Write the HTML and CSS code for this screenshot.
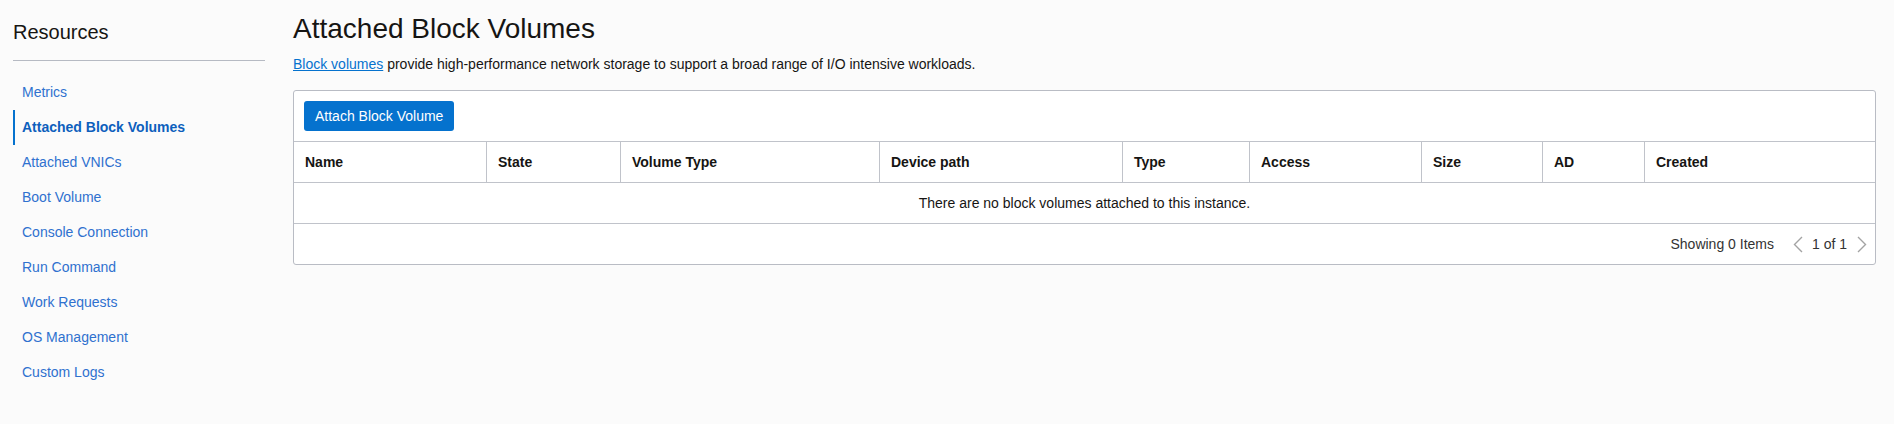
FILE: index.html
```html
<!DOCTYPE html>
<html lang="en">
<head>
<meta charset="utf-8">
<title>Attached Block Volumes</title>
<link rel="stylesheet" href="styles.css">
</head>
<body>
<div class="page">
  <aside class="sidebar">
    <h2 class="sidebar-title">Resources</h2>
    <nav class="sidebar-nav">
      <a class="nav-link" href="#">Metrics</a>
      <a class="nav-link active" href="#">Attached Block Volumes</a>
      <a class="nav-link" href="#">Attached VNICs</a>
      <a class="nav-link" href="#">Boot Volume</a>
      <a class="nav-link" href="#">Console Connection</a>
      <a class="nav-link" href="#">Run Command</a>
      <a class="nav-link" href="#">Work Requests</a>
      <a class="nav-link" href="#">OS Management</a>
      <a class="nav-link" href="#">Custom Logs</a>
    </nav>
  </aside>
  <main class="main">
    <h1 class="title">Attached Block Volumes</h1>
    <p class="subtitle"><a class="link" href="#">Block volumes</a> provide high-performance network storage to support a broad range of I/O intensive workloads.</p>
    <section class="panel">
      <div class="toolbar">
        <button class="btn-primary" type="button">Attach Block Volume</button>
      </div>
      <div class="grid-row head">
        <div class="th">Name</div>
        <div class="th">State</div>
        <div class="th">Volume Type</div>
        <div class="th">Device path</div>
        <div class="th">Type</div>
        <div class="th">Access</div>
        <div class="th">Size</div>
        <div class="th">AD</div>
        <div class="th">Created</div>
      </div>
      <div class="empty">There are no block volumes attached to this instance.</div>
      <div class="footer">
        <span class="count">Showing 0 Items</span>
        <span class="pager">
          <svg class="chev" width="10" height="17" viewBox="0 0 10 17"><polyline points="9,1 1.5,8.5 9,16" fill="none" stroke="#a3a3a3" stroke-width="1.4"/></svg>
          <span class="pages">1 of 1</span>
          <svg class="chev" width="10" height="17" viewBox="0 0 10 17"><polyline points="1,1 8.5,8.5 1,16" fill="none" stroke="#a3a3a3" stroke-width="1.4"/></svg>
        </span>
      </div>
    </section>
  </main>
</div>
</body>
</html>
```
FILE: styles.css
```css
* { box-sizing: border-box; }
html, body {
  margin: 0;
  padding: 0;
  background: #fbfbfb;
  font-family: "Liberation Sans", Arial, sans-serif;
  color: #161513;
}
.page {
  display: flex;
  align-items: flex-start;
  padding-right: 18px;
}
.sidebar {
  width: 265px;
  flex: none;
  padding-left: 13px;
  padding-top: 20px;
}
.sidebar-title {
  margin: 0;
  font-size: 20px;
  line-height: 24px;
  font-weight: normal;
  color: #161513;
  padding-bottom: 16px;
  border-bottom: 1px solid #b6bac3;
}
.sidebar-nav {
  display: flex;
  flex-direction: column;
  margin-top: 14px;
}
.nav-link {
  display: block;
  height: 35px;
  line-height: 35px;
  font-size: 14px;
  color: #2f71cf;
  text-decoration: none;
  border-left: 2px solid transparent;
  padding-left: 7px;
}
.nav-link.active {
  border-left-color: #0572ce;
  font-weight: bold;
  color: #0d5fbd;
}
.main {
  flex: 1;
  margin-left: 28px;
  padding-top: 12px;
}
.title {
  margin: 0;
  font-size: 28px;
  line-height: 34px;
  font-weight: normal;
  color: #161513;
}
.subtitle {
  margin: 8px 0 0;
  font-size: 14px;
  line-height: 20px;
  color: #161513;
}
.link {
  color: #0572ce;
  text-decoration: underline;
}
.panel {
  margin-top: 16px;
  background: #fff;
  border: 1px solid #b9bcc4;
  border-radius: 3px;
}
.toolbar {
  padding: 10px;
  border-bottom: 1px solid #c0c3ca;
}
.btn-primary {
  display: block;
  height: 30px;
  padding: 0 11px;
  border: none;
  border-radius: 3px;
  background: #0572ce;
  color: #fff;
  font-family: "Liberation Sans", Arial, sans-serif;
  font-size: 14px;
  line-height: 30px;
}
.grid-row {
  display: grid;
  grid-template-columns: 192px 134px 259px 243px 127px 172px 121px 102px 1fr;
}
.head {
  border-bottom: 1px solid #c0c3ca;
}
.th {
  height: 40px;
  line-height: 40px;
  padding-left: 11px;
  font-size: 14px;
  font-weight: bold;
  color: #161513;
  border-left: 1px solid #c0c3ca;
  white-space: nowrap;
}
.th:first-child { border-left: none; }
.empty {
  height: 41px;
  line-height: 40px;
  text-align: center;
  font-size: 14px;
  color: #161513;
  border-bottom: 1px solid #c0c3ca;
}
.footer {
  height: 40px;
  display: flex;
  align-items: center;
  justify-content: flex-end;
  padding-right: 8px;
  font-size: 14px;
  color: #333;
}
.pager {
  display: flex;
  align-items: center;
  margin-left: 19px;
}
.pages {
  margin: 0 10px 0 9px;
}
.chev { display: block; }
```
